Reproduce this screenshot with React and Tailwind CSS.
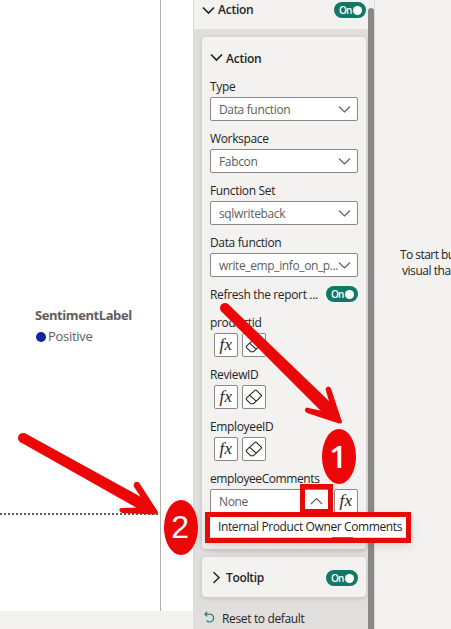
import React from "react";

const Toggle = () => (
  <div className="relative h-4 w-8 shrink-0 rounded-full bg-[#117865] pl-[5px] text-[10px] font-semibold leading-[17px] tracking-[-0.9px] text-white">
    On
    <span className="absolute right-[4.5px] top-[3.5px] size-[9px] rounded-full bg-white" />
  </div>
);

const Chevron = ({ d = "M1 1.5l5.5 5.5L12 1.5", thick = false, className = "" }) => (
  <svg width="13" height="9" viewBox="0 0 13 9" fill="none" stroke={thick ? "#252423" : "#605e5c"} strokeWidth={thick ? 1.7 : 1.1} className={"shrink-0 " + className}>
    <path d={d} />
  </svg>
);

const Label = ({ children }) => (
  <div className="flex h-7 items-center whitespace-nowrap pt-2 text-[12px]">{children}</div>
);

const Select = ({ label, value, valueClass = "" }) => (
  <div>
    <Label>{label}</Label>
    <div className="flex h-6 items-center justify-between rounded-[2px] border border-[#8a8886] bg-white pl-2 pr-[6px] text-[12px] text-[#605e5c]">
      <span className={"whitespace-nowrap pt-0.5 " + valueClass}>{value}</span>
      <Chevron />
    </div>
  </div>
);

const Fx = () => (
  <div className="flex size-6 shrink-0 items-center justify-center rounded-[2px] border border-[#8a8886] bg-white pb-0.5 font-['Liberation_Serif',serif] text-[17px] italic leading-none tracking-[0.4px] text-[#252423]">
    fx
  </div>
);

const Eraser = () => (
  <div className="flex size-6 items-center justify-center rounded-[2px] border border-[#8a8886] bg-white">
    <svg width="18" height="18" viewBox="0 0 18 18" fill="none" stroke="#252423" strokeWidth="1.1" strokeLinejoin="round">
      <path d="M1.4 10.2L10.2 2.2Q10.8 1.8 11.4 2.4L16.2 7.2Q16.8 7.8 16.2 8.4L8.3 15.8H5.8L1.5 11.6Q1 10.8 1.4 10.2ZM4.8 7.4L11.2 13.2" />
    </svg>
  </div>
);

const Param = ({ label }) => (
  <div>
    <Label>{label}</Label>
    <div className="flex gap-1 pl-1">
      <Fx />
      <Eraser />
    </div>
  </div>
);

export default function App() {
  return (
    <div className="relative flex h-[629px] w-[451px] overflow-hidden bg-[#f3f2f1] font-['Open_Sans','Noto_Sans',sans-serif] tracking-[-0.35px] text-[#252423]">
      <div className="flex h-[611px] w-[193px] shrink-0 bg-white">
        <div className="flex w-[161px] flex-col border-r border-[#b3b0ad] text-[#605e5c]">
          <div className="h-[513px] pl-[35px] pt-[306px]">
            <div className="h-[19px] whitespace-nowrap text-[13px] font-bold leading-[19px] tracking-[-0.43px]">SentimentLabel</div>
            <div className="mt-0.5 flex h-[19px] items-center gap-[2px] pl-px text-[13px] tracking-[-0.3px]">
              <span className="size-[10px] rounded-full bg-[#12239e]" />
              Positive
            </div>
          </div>
          <div className="h-[2px] w-[158px] bg-[repeating-linear-gradient(90deg,#605e5c_0_2px,transparent_2px_4px)]" />
        </div>
      </div>

      <div className="flex w-[182px] shrink-0 border-x border-[#dddbd9] bg-[#e1dfdd]">
        <div className="w-[174px] shrink-0">
          <div className="-mr-1.5 flex h-[29px] items-start bg-[#f3f2f1] pl-2 pr-[8px] pt-0.5">
            <Chevron thick className="mt-1" />
            <span className="ml-[3px] flex-1 text-[12px] font-semibold leading-4 tracking-[-0.25px]">Action</span>
            <Toggle />
          </div>

          <div className="ml-2 mt-2 h-[512px] w-[164px] rounded-[4px] bg-[#f3f2f1] px-2 shadow-[0_1px_4px_rgba(0,0,0,0.16)]">
            <div className="flex h-8 items-center gap-[3px] pt-[9px] text-[12px] font-semibold tracking-[-0.25px]">
              <Chevron thick />
              <span className="pt-0.5">Action</span>
            </div>
            <Select label="Type" value="Data function" />
            <Select label="Workspace" value="Fabcon" />
            <Select label="Function Set" value="sqlwriteback" />
            <Select label="Data function" value="write_emp_info_on_p..." valueClass="w-[119px] tracking-[-0.38px]" />
            <div className="flex h-7 items-center justify-between whitespace-nowrap pt-1.5 text-[12px]">
              <span className="pt-0.5">Refresh the report ...</span>
              <Toggle />
            </div>
            <Param label="productid" />
            <Param label="ReviewID" />
            <Param label="EmployeeID" />
            <Label>
              <span className="tracking-[-0.41px]">employeeComments</span>
            </Label>
            <div className="flex gap-1">
              <div className="flex h-6 w-[120px] items-center justify-between rounded-[2px] border border-[#8a8886] bg-white pl-2 pr-[6px] text-[12px] text-[#605e5c]">
                <span className="pt-0.5">None</span>
                <Chevron d="M1 7l5.5-5.5L12 7" />
              </div>
              <Fx />
            </div>
          </div>

          <div className="ml-2 mt-2 flex h-10 w-[164px] items-center rounded-[4px] bg-[#f3f2f1] px-2 pt-0.5 shadow-[0_1px_4px_rgba(0,0,0,0.16)]">
            <svg width="13" height="14" viewBox="0 0 13 14" fill="none" stroke="#252423" strokeWidth="1.5">
              <path d="M3.5 1.2L9 6.5L3.5 12" />
            </svg>
            <span className="ml-[3px] flex-1 text-[12px] font-semibold">Tooltip</span>
            <Toggle />
          </div>

          <div className="ml-2 flex h-[32px] items-center gap-[6px] whitespace-nowrap pl-[2px] pt-[9px] text-[12px]">
            <svg width="12" height="13" viewBox="0 0 12 13" fill="none" stroke="#117865" strokeWidth="1.1">
              <path d="M3.2 1L1 3.2L3.2 5.4M1.2 3.2H7A4 4 0 1 1 2.6 9.6" />
            </svg>
            <span className="pt-0.5">Reset to default</span>
          </div>
        </div>
        <div className="mt-2 h-[621px] w-1.5 shrink-0 rounded-t-[3px] bg-[#8a8886]" />
      </div>

      <div className="w-[76px] pl-[25px] pt-[247px] text-[12px] leading-4 tracking-[-0.45px]">
        <div className="whitespace-nowrap tracking-[-0.55px]">To start bu</div>
        <div className="whitespace-nowrap pl-0.5">visual tha</div>
      </div>

      {/* open dropdown and its outline */}
      <div className="absolute left-[205px] top-[512px] flex h-[31px] w-[206px] items-center whitespace-nowrap border-[5px] border-[#eb0707] bg-white pb-[2px] pl-2 text-[12px] tracking-[-0.38px] shadow-[0_4px_10px_rgba(0,0,0,0.1)]">
        Internal Product Owner Comments
        <span className="absolute bottom-0 left-0 h-px w-full bg-[#d8d6d4]" />
        <span className="absolute bottom-0 left-[122px] h-px w-[21px] bg-[#6d6b69]" />
      </div>
      <div className="absolute left-[300px] top-[484px] h-[30px] w-[33px] border-[5px] border-[#eb0707]" />

      {/* numbered callouts and arrows */}
      <svg className="absolute inset-0" width="451" height="629" viewBox="0 0 451 629" fill="#eb0707">
        <circle cx="225" cy="308" r="5" />
        <path d="M228.500 304.500L330 402L334 415L322 412L221.500 311.500Z" />
        <path d="M325.500 389Q328 384.500 331 388.500L342 422Q341.500 424 339 423.500L307 413Q303 410 306.500 407.500L322 411L329.500 403Z" />
        <circle cx="23" cy="438" r="5" />
        <path d="M25.500 433.500L142 497.500L148 509L137 508L20.500 442.300Z" />
        <path d="M133.500 486Q134.500 480 139 482.500L158 512Q157 515 154 514.500L122 513Q117 510 121 508L137 507.500L142 499Z" />
        <ellipse cx="339" cy="456.500" rx="17" ry="27.500" />
        <ellipse cx="181" cy="527.500" rx="17" ry="27.500" />
      </svg>
      <div className="absolute left-[321px] top-[439px] w-[34px] text-center font-['Open_Sans',sans-serif] text-[31px] font-semibold leading-[34px] text-white">1</div>
      <div className="absolute left-[163px] top-[510px] w-[34px] text-center font-['Liberation_Sans',sans-serif] text-[32px] leading-[34px] text-white">2</div>
    </div>
  );
}
